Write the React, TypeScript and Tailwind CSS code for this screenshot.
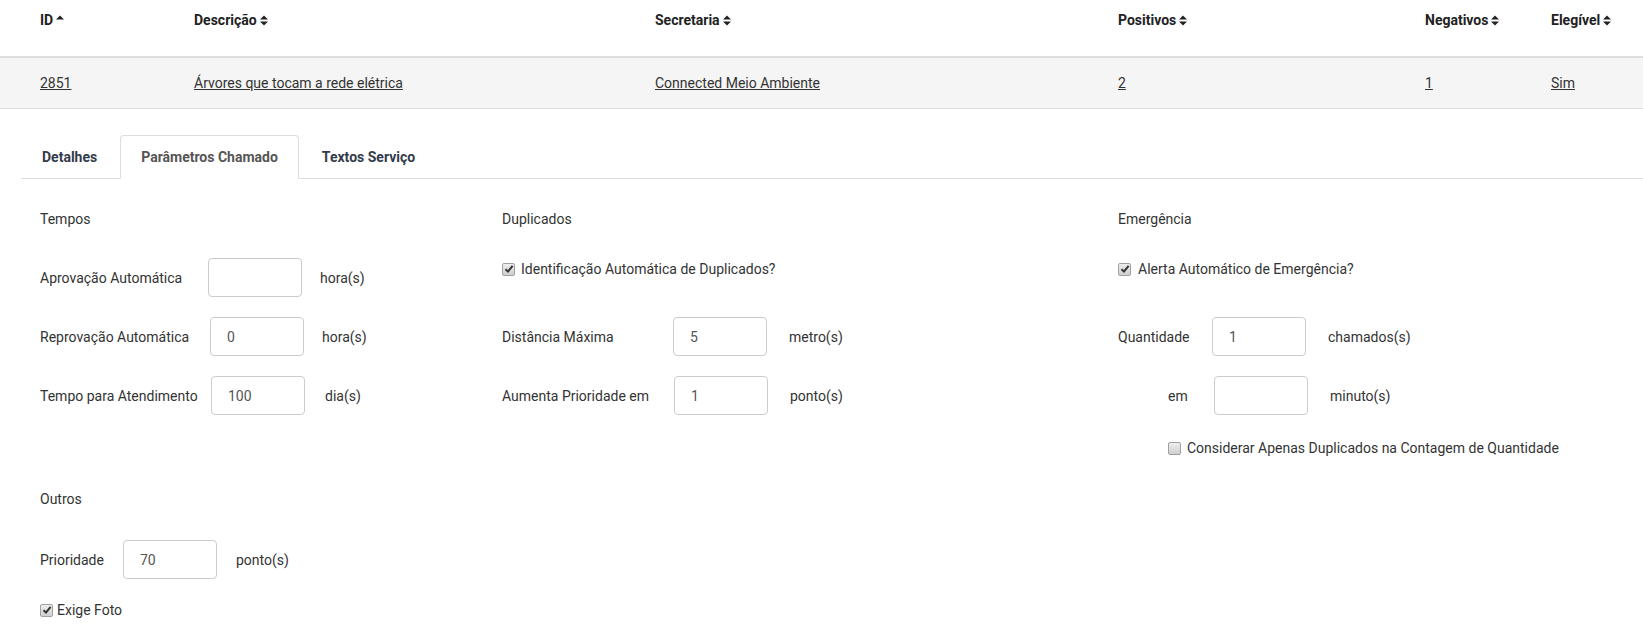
import React from 'react';

// Ícone de ordenação (estilo fa-sort / fa-sort-up)
const SortIcon: React.FC<{ up?: boolean }> = ({ up }) => (
  <svg width="8" height="11" viewBox="0 0 8 11" className="ml-[3px] inline-block">
    <path d="M0 4.5 L4 0.5 L8 4.5Z" fill="#222" />
    {!up && <path d="M0 6.5 L4 10.5 L8 6.5Z" fill="#222" />}
  </svg>
);

// Checkbox no estilo antigo do Chrome
const Check: React.FC<{ checked?: boolean }> = ({ checked }) => (
  <span className="inline-flex h-[13px] w-[13px] shrink-0 items-center justify-center rounded-[2px] border border-[#a0a0a0] bg-linear-to-b from-[#eeeeee] to-[#cfcfcf]">
    {checked && (
      <svg width="10" height="10" viewBox="0 0 10 10">
        <path d="M1.5 5.2 L4 7.6 L8.6 1.8" stroke="#333" strokeWidth="2" fill="none" />
      </svg>
    )}
  </span>
);

const headers = [
  { label: 'ID', up: true },
  { label: 'Descrição' },
  { label: 'Secretaria' },
  { label: 'Positivos' },
  { label: 'Negativos' },
  { label: 'Elegível' },
];

const row = ['2851', 'Árvores que tocam a rede elétrica', 'Connected Meio Ambiente', '2', '1', 'Sim'];

const cols = 'grid grid-cols-[154px_461px_463px_307px_126px_1fr] pl-[40px]';

type FieldProps = {
  label: string;
  value?: string;
  unit: string;
  labelW: string;
  unitGap?: string;
};

const Field: React.FC<FieldProps> = ({ label, value, unit, labelW, unitGap = 'ml-[19px]' }) => (
  <div className="flex h-[39px] items-center">
    <span className={`${labelW} shrink-0 whitespace-nowrap`}>{label}</span>
    <div className="flex h-[39px] w-[94px] items-center rounded-[4px] border border-[#ccc] bg-white pl-[16px] text-[#555]">
      {value}
    </div>
    <span className={unitGap}>{unit}</span>
  </div>
);

const App: React.FC = () => {
  return (
    <div className="min-h-screen w-full overflow-hidden bg-white font-['Roboto',sans-serif] text-[14px] leading-5 text-[#333]">
      {/* Tabela */}
      <div className={`${cols} h-[58px] items-start border-b-2 border-[#ddd] pt-[10px] font-bold text-[#222]`}>
        {headers.map((h) => (
          <div key={h.label} className="flex h-5 items-center whitespace-nowrap">
            {h.label}
            <SortIcon up={h.up} />
          </div>
        ))}
      </div>
      <div className={`${cols} h-[51px] items-center border-b border-[#ddd] bg-[#f5f5f5]`}>
        {row.map((c, i) => (
          <div key={i} className="whitespace-nowrap">
            <a className="underline">{c}</a>
          </div>
        ))}
      </div>

      {/* Abas */}
      <div className="ml-[21px] mt-[26px] flex border-b border-[#ddd] font-bold">
        <div className="mr-[2px] -mb-px border border-transparent px-5 py-[11px] text-[#333b4a]">Detalhes</div>
        <div className="mr-[2px] -mb-px rounded-t-[4px] border border-[#ddd] border-b-white bg-white px-5 py-[11px] text-[#555]">
          Parâmetros Chamado
        </div>
        <div className="mr-[2px] -mb-px border border-transparent px-5 py-[11px] text-[#333b4a]">Textos Serviço</div>
      </div>

      {/* Conteúdo */}
      <div className="pl-[40px] pt-[30px]">
        <div className="flex">
          {/* Tempos */}
          <div className="w-[462px]">
            <div>Tempos</div>
            <div className="mt-[29px] flex flex-col gap-[20px]">
              <Field label="Aprovação Automática" unit="hora(s)" labelW="w-[168px]" unitGap="ml-[18px]" />
              <Field label="Reprovação Automática" value="0" unit="hora(s)" labelW="w-[170px]" unitGap="ml-[18px]" />
              <Field label="Tempo para Atendimento" value="100" unit="dia(s)" labelW="w-[171px]" unitGap="ml-[20px]" />
            </div>
          </div>

          {/* Duplicados */}
          <div className="w-[616px]">
            <div>Duplicados</div>
            <label className="mt-[30px] flex h-5 items-center">
              <Check checked />
              <span className="ml-[6px]">Identificação Automática de Duplicados?</span>
            </label>
            <div className="mt-[38px] flex flex-col gap-[20px]">
              <Field label="Distância Máxima" value="5" unit="metro(s)" labelW="w-[171px]" unitGap="ml-[22px]" />
              <Field label="Aumenta Prioridade em" value="1" unit="ponto(s)" labelW="w-[172px]" unitGap="ml-[22px]" />
            </div>
          </div>

          {/* Emergência */}
          <div className="flex-1">
            <div>Emergência</div>
            <label className="mt-[30px] flex h-5 items-center">
              <Check checked />
              <span className="ml-[7px]">Alerta Automático de Emergência?</span>
            </label>
            <div className="mt-[38px] flex flex-col gap-[20px]">
              <Field label="Quantidade" value="1" unit="chamados(s)" labelW="w-[94px]" unitGap="ml-[22px]" />
              <div className="pl-[50px]">
                <Field label="em" unit="minuto(s)" labelW="w-[46px]" unitGap="ml-[22px]" />
              </div>
            </div>
            <label className="ml-[50px] mt-[23px] flex h-5 items-center">
              <Check />
              <span className="ml-[6px]">Considerar Apenas Duplicados na Contagem de Quantidade</span>
            </label>
          </div>
        </div>

        {/* Outros */}
        <div className="mt-[31px]">
          <div>Outros</div>
          <div className="mt-[31px]">
            <Field label="Prioridade" value="70" unit="ponto(s)" labelW="w-[83px]" unitGap="ml-[19px]" />
          </div>
          <label className="mt-[21px] flex h-5 items-center">
            <Check checked />
            <span className="ml-[4px]">Exige Foto</span>
          </label>
        </div>
      </div>
    </div>
  );
};

export default App;
